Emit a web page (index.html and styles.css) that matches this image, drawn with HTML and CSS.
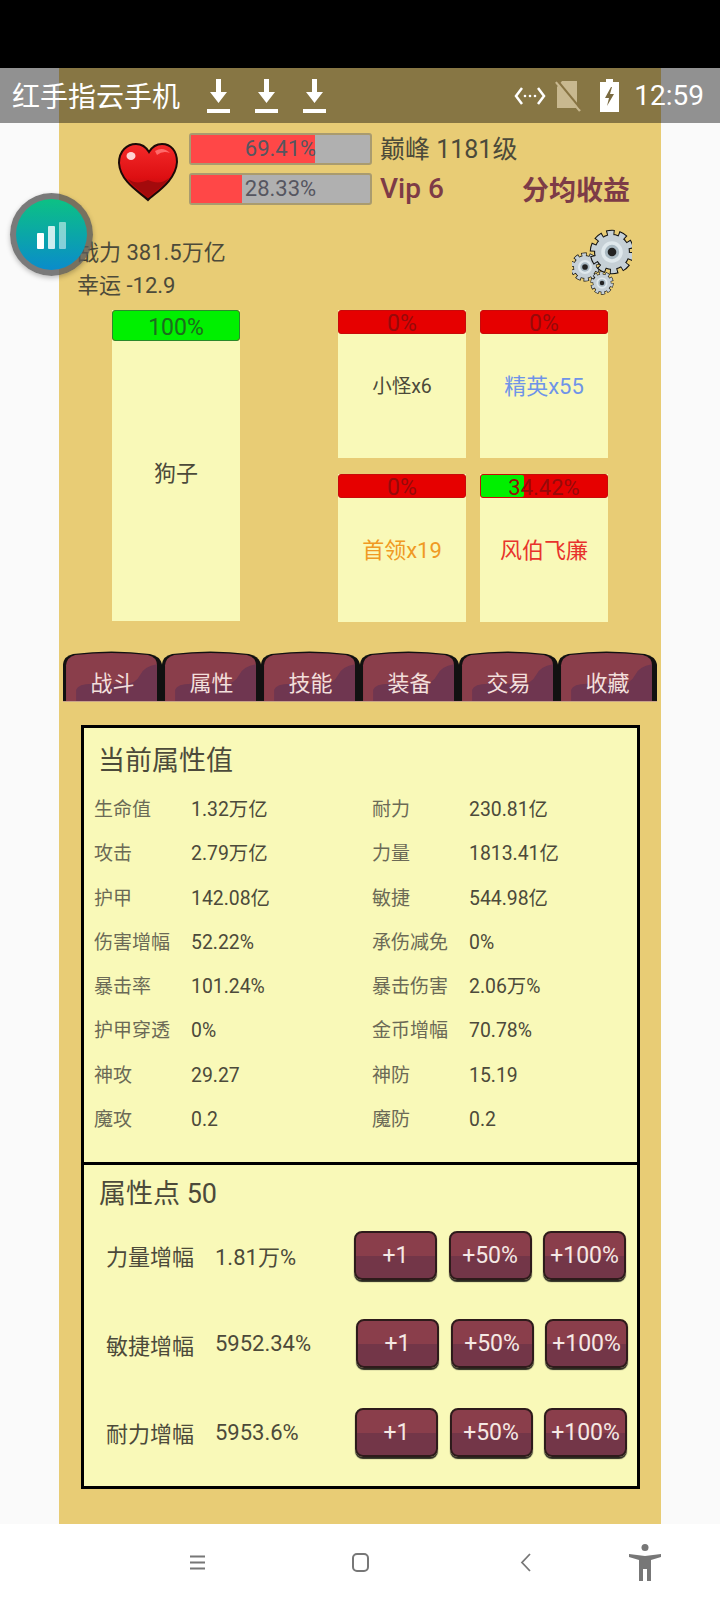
FILE: index.html
```html
<!DOCTYPE html>
<html lang="zh">
<head>
    <meta charset="UTF-8">
    <meta name="viewport" content="width=device-width, initial-scale=1.0">
    <title>红手指云手机</title>
    <link rel="stylesheet" href="styles.css">
</head>
<body>

<svg class="defs" width="0" height="0">
    <defs>
        <linearGradient id="heartFill" x1="0" y1="0" x2="0" y2="1">
            <stop offset="0" stop-color="#f42a2a"/>
            <stop offset="0.6" stop-color="#dd0f12"/>
            <stop offset="1" stop-color="#a50808"/>
        </linearGradient>
        <symbol id="download" viewBox="0 0 23 34">
            <path d="M9 0h5v13h6l-8.500 11L3 13h6z" fill="#fff"/>
            <rect x="0" y="30" width="23" height="4" fill="#fff"/>
        </symbol>
        <symbol id="gear" viewBox="-32 -32 64 64">
            <circle r="25" fill="#111"/>
            <circle r="24" fill="none" stroke="#111" stroke-width="14" stroke-dasharray="10 5.080"/>
            <circle r="23.500" fill="#c6d0d6"/>
            <circle r="24" fill="none" stroke="#c6d0d6" stroke-width="11" stroke-dasharray="7.600 7.480" stroke-dashoffset="-1.200"/>
            <circle r="15" fill="#dfe8ec"/>
            <circle r="10" fill="#a9b9c2"/>
            <circle r="6" fill="#222"/>
        </symbol>
        <symbol id="tabShape" viewBox="0 0 98 50" preserveAspectRatio="none">
            <path d="M0 50V13Q1 5 10 3Q48 -2 86 3Q96 5 98 13V50Z" fill="#111"/>
            <path d="M3 50V14Q4 6 12 4Q48 0 84 4Q93 6 93 14V50Z" fill="#8a3e4b"/>
            <path d="M13 50V38Q15 32 29 32H62Q72 32 76 24Q80 15 93 13V50Z" fill="#6f3650"/>
            <rect x="0" y="49" width="98" height="1" fill="#c9a48a"/>
        </symbol>
    </defs>
</svg>

<div class="top-black"></div>

<div class="screen">
    <div class="game">
        <!-- hp / level -->
        <div class="header">
            <svg class="heart" viewBox="0 0 62 60">
                <path d="M31 58C24 51 3 40 2 21C2 9 10 2 19 2C25 2 29 5 32 10C35 5 39 2 45 2C54 2 60 9 60 20C59 39 38 51 31 58Z" fill="url(#heartFill)" stroke="#1c0a08" stroke-width="2"/>
                <path d="M31 55C25 49 16 45 11 37C18 42 24 41 31 38C38 41 45 42 52 36C47 45 37 49 31 55Z" fill="#a30a0c"/>
                <ellipse cx="14" cy="14" rx="4.500" ry="4" fill="#ffd4d4"/>
                <path d="M38 9Q46 4 53 11Q46 8 40 13Z" fill="#ff6a6a"/>
            </svg>
            <div class="bars">
                <div class="hp-bar"><div class="hp-fill" style="width:69.41%"></div><span>69.41%</span></div>
                <div class="hp-bar"><div class="hp-fill" style="width:28.33%"></div><span>28.33%</span></div>
            </div>
            <div class="info">
                <div class="level">巅峰 1181级</div>
                <div class="info-row">
                    <span class="vip">Vip 6</span>
                    <span class="share">分均收益</span>
                </div>
            </div>
        </div>

        <div class="stats-row">
            <div class="power">
                <div>战力 381.5万亿</div>
                <div>幸运 -12.9</div>
            </div>
            <svg class="gears" viewBox="0 0 60 67">
                <use href="#gear" x="-2" y="23" width="30" height="30"/>
                <use href="#gear" x="17" y="0" width="46" height="46"/>
                <use href="#gear" x="18" y="42" width="24" height="24"/>
            </svg>
        </div>

        <!-- enemies -->
        <div class="arena">
            <div class="card card-tall">
                <div class="bar bar-tall"><div class="bar-fill" style="width:100%"></div><span>100%</span></div>
                <div class="card-name">狗子</div>
            </div>
            <div class="enemy-grid">
                <div class="card">
                    <div class="bar"><span class="zero">0%</span></div>
                    <div class="card-name small">小怪x6</div>
                </div>
                <div class="card">
                    <div class="bar"><span class="zero">0%</span></div>
                    <div class="card-name blue">精英x55</div>
                </div>
                <div class="card">
                    <div class="bar"><span class="zero">0%</span></div>
                    <div class="card-name orange">首领x19</div>
                </div>
                <div class="card">
                    <div class="bar"><div class="bar-fill" style="width:34.42%"></div><span>34.42%</span></div>
                    <div class="card-name red">风伯飞廉</div>
                </div>
            </div>
        </div>

        <div class="tabs">
            <div class="tab"><svg class="tab-bg"><use href="#tabShape"/></svg><span>战斗</span></div>
            <div class="tab"><svg class="tab-bg"><use href="#tabShape"/></svg><span>属性</span></div>
            <div class="tab"><svg class="tab-bg"><use href="#tabShape"/></svg><span>技能</span></div>
            <div class="tab"><svg class="tab-bg"><use href="#tabShape"/></svg><span>装备</span></div>
            <div class="tab"><svg class="tab-bg"><use href="#tabShape"/></svg><span>交易</span></div>
            <div class="tab"><svg class="tab-bg"><use href="#tabShape"/></svg><span>收藏</span></div>
        </div>

        <div class="panel panel-attrs">
            <h2>当前属性值</h2>
            <div class="attr-grid">
                <span class="key">生命值</span><span class="val">1.32万亿</span><span class="key">耐力</span><span class="val">230.81亿</span>
                <span class="key">攻击</span><span class="val">2.79万亿</span><span class="key">力量</span><span class="val">1813.41亿</span>
                <span class="key">护甲</span><span class="val">142.08亿</span><span class="key">敏捷</span><span class="val">544.98亿</span>
                <span class="key">伤害增幅</span><span class="val">52.22%</span><span class="key">承伤减免</span><span class="val">0%</span>
                <span class="key">暴击率</span><span class="val">101.24%</span><span class="key">暴击伤害</span><span class="val">2.06万%</span>
                <span class="key">护甲穿透</span><span class="val">0%</span><span class="key">金币增幅</span><span class="val">70.78%</span>
                <span class="key">神攻</span><span class="val">29.27</span><span class="key">神防</span><span class="val">15.19</span>
                <span class="key">魔攻</span><span class="val">0.2</span><span class="key">魔防</span><span class="val">0.2</span>
            </div>
        </div>

        <div class="panel panel-points">
            <h3>属性点 50</h3>
            <div class="point-row">
                <span>力量增幅</span><span>1.81万%</span>
                <div class="btns"><button>+1</button><button>+50%</button><button>+100%</button></div>
            </div>
            <div class="point-row">
                <span>敏捷增幅</span><span>5952.34%</span>
                <div class="btns btns-2"><button>+1</button><button>+50%</button><button>+100%</button></div>
            </div>
            <div class="point-row">
                <span>耐力增幅</span><span>5953.6%</span>
                <div class="btns btns-3"><button>+1</button><button>+50%</button><button>+100%</button></div>
            </div>
        </div>
    </div>

    <!-- status bar sits over the game -->
    <div class="status">
        <span class="status-title">红手指云手机</span>
        <svg class="dl"><use href="#download"/></svg>
        <svg class="dl"><use href="#download"/></svg>
        <svg class="dl"><use href="#download"/></svg>
        <div class="status-right">
            <svg class="net" width="32" height="20" viewBox="0 0 32 20">
                <path d="M8 2L2 10l6 8M24 2l6 8-6 8" fill="none" stroke="#fff" stroke-width="2.500"/>
                <circle cx="11" cy="10" r="1.300" fill="#fff"/><circle cx="16" cy="10" r="1.300" fill="#fff"/><circle cx="21" cy="10" r="1.300" fill="#fff"/>
            </svg>
            <svg class="sim" width="26" height="32" viewBox="0 0 26 32">
                <path d="M7 1H22V28H2V7Z" fill="#c8b88f"/>
                <path d="M1 2L25 31" stroke="#c8b88f" stroke-width="2.500"/>
                <path d="M2 0L26 29" stroke="#887443" stroke-width="2"/>
            </svg>
            <svg class="battery" width="19" height="33" viewBox="0 0 19 33">
                <path d="M6 0h7v3h6v30H0V3h6z" fill="#fff"/>
                <path d="M11 8L5 19h4l-2 8 7-12h-4l2-7z" fill="#7a6a40"/>
            </svg>
            <span class="clock">12:59</span>
        </div>
    </div>

    <!-- floating button -->
    <div class="float-btn">
        <div class="float-inner">
            <i class="fb1"></i><i class="fb2"></i><i class="fb3"></i>
        </div>
    </div>
</div>

<div class="navbar">
    <svg width="15" height="15" viewBox="0 0 15 15"><path d="M0 1.500h15M0 7.500h15M0 13.500h15" stroke="#777" stroke-width="1.800"/></svg>
    <svg width="17" height="19" viewBox="0 0 17 19"><rect x="1" y="1" width="15" height="17" rx="4" fill="none" stroke="#777" stroke-width="2"/></svg>
    <svg width="11" height="19" viewBox="0 0 11 19"><path d="M10 1L2 9.500l8 8.500" fill="none" stroke="#777" stroke-width="1.800"/></svg>
    <svg width="32" height="37" viewBox="0 0 32 37"><circle cx="16" cy="3.500" r="3.500" fill="#777"/><path d="M0 10L16 12L32 10V13L22 16V37H18V25H14V37H10V16L0 13Z" fill="#777"/></svg>
</div>

</body>
</html>
```

FILE: styles.css
```css
* {
    box-sizing: border-box;
}
body {
    margin: 0;
    width: 720px;
    height: 1600px;
    overflow: hidden;
    background-color: #fff;
    font-family: Roboto, "Noto Sans CJK SC", sans-serif;
    color: #4c4a3a;
}
.defs {
    position: absolute;
}
.top-black {
    height: 68px;
    background-color: #000;
}
.screen {
    position: relative;
    height: 1456px;
    background-color: #fafafa;
}
.game {
    width: 602px;
    height: 1456px;
    margin-left: 59px;
    padding-top: 65px;
    background-color: #e8cc75;
}

/* status bar */
.status {
    position: absolute;
    top: 0;
    left: 0;
    width: 720px;
    height: 55px;
    display: flex;
    align-items: center;
    padding-left: 12px;
    background-color: rgba(0, 0, 0, 0.42);
    color: #fff;
}
.status-title {
    width: 195px;
    font-size: 28px;
    margin-top: -2px;
}
.dl {
    width: 23px;
    height: 34px;
    margin-right: 25px;
    margin-top: 1px;
}
.status-right {
    position: absolute;
    right: 16px;
    top: 0;
    height: 55px;
    display: flex;
    align-items: center;
}
.net {
    margin-right: 9px;
}
.sim {
    margin-right: 19px;
}
.battery {
    margin-right: 15px;
}
.clock {
    font-size: 28px;
}

/* floating button */
.float-btn {
    position: absolute;
    left: 10px;
    top: 125px;
    width: 83px;
    height: 83px;
    padding: 6px;
    border-radius: 50%;
    background-color: rgba(90, 90, 90, 0.8);
    box-shadow: 0 2px 5px rgba(0, 0, 0, 0.25);
}
.float-inner {
    height: 71px;
    display: flex;
    align-items: flex-end;
    justify-content: center;
    gap: 4px;
    padding-bottom: 21px;
    border-radius: 50%;
    background: linear-gradient(#0cc184, #0a8ccb);
}
.float-inner i {
    width: 7px;
    border-radius: 1px;
    background-color: #fff;
}
.fb1 {
    height: 16px;
}
.fb2 {
    height: 23px;
    opacity: 0.8;
}
.fb3 {
    height: 27px;
    opacity: 0.5;
}

/* header */
.header {
    display: flex;
    height: 72px;
    padding-left: 58px;
}
.heart {
    width: 62px;
    height: 60px;
    margin-top: 9px;
    margin-right: 10px;
}
.bars {
    width: 183px;
    display: flex;
    flex-direction: column;
    gap: 8px;
}
.hp-bar {
    position: relative;
    height: 32px;
    background-color: #b0b0b0;
    border: 2px solid #a99b6f;
    border-radius: 3px;
    text-align: center;
    font-size: 22px;
    line-height: 28px;
    color: #565660;
}
.hp-bar span {
    position: relative;
}
.hp-fill {
    position: absolute;
    left: 0;
    top: 0;
    bottom: 0;
    background-color: #ff4747;
}
.info {
    width: 250px;
    margin-left: 8px;
}
.level {
    font-size: 25px;
    line-height: 34px;
}
.info-row {
    display: flex;
    justify-content: space-between;
    align-items: center;
    height: 38px;
    margin-top: 2px;
    color: #7d3b47;
    font-weight: bold;
}
.vip {
    font-size: 28px;
    font-weight: 500;
}
.share {
    font-size: 27px;
}

.stats-row {
    display: flex;
    justify-content: space-between;
    height: 81px;
    margin-top: 24px;
    padding: 0 29px 0 18px;
}
.power {
    padding-top: 7px;
    font-size: 22px;
    line-height: 33px;
}
.gears {
    width: 60px;
    height: 67px;
}

/* enemies */
.arena {
    display: flex;
    justify-content: space-between;
    padding: 0 53px;
}
.enemy-grid {
    display: grid;
    grid-template-columns: 128px 128px;
    grid-template-rows: 148px 148px;
    gap: 16px 14px;
}
.card {
    display: flex;
    flex-direction: column;
    width: 128px;
    background-color: #f9f9b8;
    text-align: center;
}
.card-tall {
    height: 311px;
}
.bar {
    position: relative;
    height: 24px;
    background-color: #e60000;
    border: 1px solid #c80a0a;
    border-radius: 3px;
    font-size: 22px;
    line-height: 26px;
    color: #960a0a;
}
.bar span {
    position: relative;
}
.bar .zero {
    font-size: 23px;
}
.bar-tall {
    height: 31px;
    line-height: 33px;
    border-color: #2a8a2a;
    color: #1d6b1d;
    font-size: 23px;
}
.bar-fill {
    position: absolute;
    left: 0;
    top: 0;
    bottom: 0;
    border-radius: 2px;
    background-color: #00f000;
}
.card-name {
    flex: 1;
    display: flex;
    align-items: center;
    justify-content: center;
    font-size: 22px;
    padding-bottom: 24px;
}
.card-tall .card-name {
    padding-bottom: 20px;
}
.small {
    font-size: 19.500px;
}
.blue {
    color: #6f94e8;
}
.orange {
    color: #f09a24;
}
.red {
    color: #e8332c;
}

/* tabs */
.tabs {
    display: flex;
    height: 51px;
    margin-top: 29px;
    padding: 0 4px;
}
.tab {
    position: relative;
    flex: 1;
    display: flex;
    align-items: flex-end;
    justify-content: center;
    padding-bottom: 2px;
    font-size: 22px;
    line-height: 32px;
    color: #f2dfdb;
}
.tab span {
    position: relative;
}
.tab-bg {
    position: absolute;
    left: 0;
    top: 0;
    width: 100%;
    height: 100%;
}

/* panels */
.panel {
    margin: 0 21px 0 22px;
    background-color: #f9f9b8;
    border: 3px solid #000;
}
.panel-attrs {
    height: 440px;
    margin-top: 23px;
}
.panel-attrs h2 {
    height: 60px;
    margin: 0;
    padding-left: 14px;
    font-size: 27px;
    font-weight: normal;
    line-height: 66px;
}
.attr-grid {
    display: grid;
    grid-template-columns: 97px 181px 97px 1fr;
    grid-auto-rows: 44.300px;
    align-items: baseline;
    line-height: 44.300px;
    padding-left: 10px;
}
.key {
    font-size: 19px;
    color: #6b6a56;
}
.val {
    font-size: 19.400px;
}
.panel-points {
    height: 324px;
    border-top: none;
}
.panel-points h3 {
    margin: 0;
    padding: 13px 0 0 15px;
    font-size: 27px;
    font-weight: normal;
    line-height: 33px;
}
.point-row {
    display: grid;
    grid-template-columns: 109px 139px auto;
    align-items: center;
    height: 88.500px;
    padding-left: 22px;
    font-size: 22px;
}
.btns {
    display: flex;
    gap: 11.500px;
}
.btns-2 {
    margin-left: 2px;
}
.btns-3 {
    margin-left: 1px;
}
button {
    width: 83px;
    height: 49px;
    padding: 0;
    border: 2px solid #2e1b1b;
    border-radius: 8px;
    background: linear-gradient(#8a3e4b 52%, #733648 52%);
    box-shadow: 0 2px 1px #2a2a20;
    font-family: inherit;
    font-size: 23px;
    color: #f5e8e4;
}

/* android nav */
.navbar {
    height: 76px;
    background-color: #fff;
    display: grid;
    grid-template-columns: 160px 166px 164px 76px;
    justify-items: center;
    align-items: center;
    padding-left: 117px;
}
```
